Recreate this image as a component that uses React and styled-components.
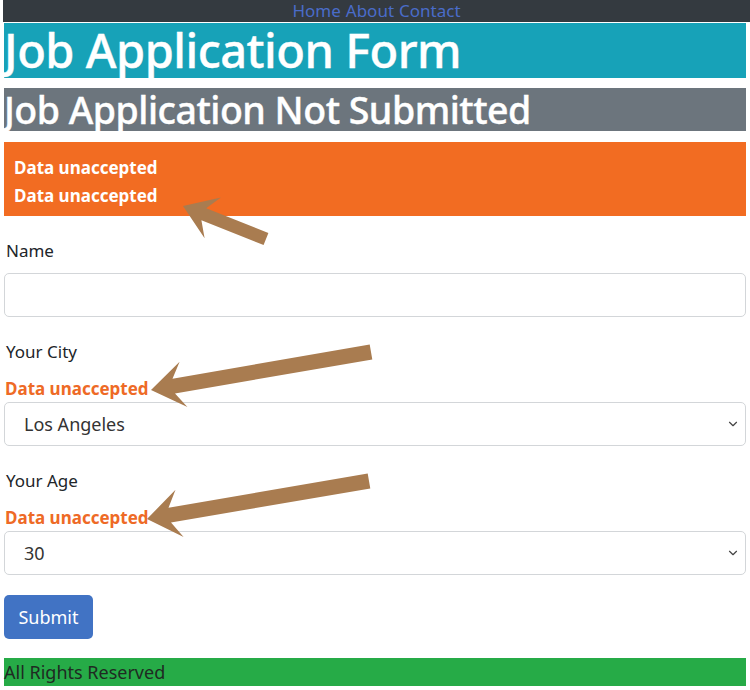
import React from "react"
import styled, { createGlobalStyle } from "styled-components"
import { ChevronDown } from "lucide-react"

const GlobalStyle = createGlobalStyle`
  body {
    margin: 0;
    background: #fff;
    font-family: "Noto Sans", "Open Sans", sans-serif;
    color: #212529;
  }
`

const Page = styled.div`
  position: relative;
  width: 750px;
  min-height: 690px;
  overflow: hidden;
`

const Nav = styled.nav`
  height: 22px;
  margin-left: 3px;
  background: #343a40;
  display: flex;
  justify-content: center;
  align-items: center;
  gap: 5px;
  font-size: 17px;
  line-height: 22px;

  a {
    color: #4a6cc9;
    text-decoration: none;
  }
`

const Container = styled.div`
  margin: 0 4px;
`

const Banner = styled.h1`
  margin: ${(p) => p.$mt}px 0 0;
  height: ${(p) => p.$h}px;
  line-height: ${(p) => p.$h}px;
  font-size: ${(p) => p.$size}px;
  font-weight: 500;
  color: #fff;
  background: ${(p) => p.$bg};
  white-space: nowrap;
  letter-spacing: -0.5px;
  -webkit-text-stroke: 0.4px #fff;
`

const Alert = styled.div`
  margin-top: 11px;
  padding: 12px 10px 6px;
  background: #f26c22;
  color: #fff;
  font-weight: 700;
  font-size: 17px;

  p {
    margin: 0;
    line-height: 28px;
  }
`

const Form = styled.form`
  padding-top: 23px;
`

const Group = styled.div`
  margin-bottom: ${(p) => p.$mb}px;
`

const Label = styled.label`
  display: block;
  padding-left: 2px;
  margin-bottom: ${(p) => p.$mb}px;
  font-size: 17px;
  line-height: 24px;
`

const Error = styled.div`
  margin: 0 0 1px 1px;
  font-size: 17px;
  line-height: 24px;
  font-weight: 700;
  color: #ee6a26;
`

const Input = styled.input`
  display: block;
  box-sizing: border-box;
  width: 100%;
  height: 44px;
  border: 1px solid #d3d6d9;
  border-radius: 5px;
  font: inherit;
  outline: none;
`

const SelectWrap = styled.div`
  position: relative;

  svg {
    position: absolute;
    right: 6px;
    top: 50%;
    transform: translateY(-50%);
    color: #444;
    pointer-events: none;
  }
`

const Select = styled.select`
  display: block;
  box-sizing: border-box;
  width: 100%;
  height: 44px;
  padding: 0 19px;
  appearance: none;
  background: #fff;
  border: 1px solid #d3d6d9;
  border-radius: 5px;
  font-family: inherit;
  font-size: 18px;
  color: #333;
  outline: none;
`

const Button = styled.button`
  display: block;
  width: 89px;
  height: 44px;
  border: none;
  border-radius: 5px;
  background: #4173c4;
  color: #fff;
  font-family: inherit;
  font-size: 18px;
`

const Footer = styled.footer`
  margin-top: 19px;
  height: 28px;
  line-height: 28px;
  background: #26ab47;
  color: #1f2a22;
  font-size: 18px;
`

const Overlay = styled.svg`
  position: absolute;
  top: 0;
  left: 0;
  pointer-events: none;
`

// tip, tail, shaft half width, head length, head half width
function arrowPoints([tx, ty], [ex, ey], w, L, H) {
  const dx = ex - tx
  const dy = ey - ty
  const len = Math.hypot(dx, dy)
  const ux = dx / len
  const uy = dy / len
  const nx = -uy
  const ny = ux
  const at = (d, o) => `${(tx + ux * d + nx * o).toFixed(1)},${(ty + uy * d + ny * o).toFixed(1)}`
  return [
    at(0, 0),
    at(L, H),
    at(L * 0.7, w),
    at(len, w),
    at(len, -w),
    at(L * 0.7, -w),
    at(L, -H),
  ].join(" ")
}

const arrows = [
  { tip: [183, 206], tail: [266, 239], w: 6.5, L: 32, H: 22 },
  { tip: [151, 390], tail: [371, 352], w: 7.5, L: 33, H: 23 },
  { tip: [147, 519], tail: [369, 481], w: 7.5, L: 33, H: 24 },
]

export default function App() {
  return (
    <Page>
      <GlobalStyle />
      <Nav>
        <a href="#">Home</a>
        <a href="#">About</a>
        <a href="#">Contact</a>
      </Nav>
      <Container>
        <Banner $mt={1} $h={55} $size={47} $bg="#17a2b8">Job Application Form</Banner>
        <Banner $mt={10} $h={43} $size={37.5} $bg="#6c757d">Job Application Not Submitted</Banner>
        <Alert>
          <p>Data unaccepted</p>
          <p>Data unaccepted</p>
        </Alert>
        <Form onSubmit={(e) => e.preventDefault()}>
          <Group $mb={23}>
            <Label $mb={10}>Name</Label>
            <Input type="text" />
          </Group>
          <Group $mb={23}>
            <Label $mb={13}>Your City</Label>
            <Error>Data unaccepted</Error>
            <SelectWrap>
              <Select defaultValue="Los Angeles">
                <option>Los Angeles</option>
                <option>New York</option>
                <option>Chicago</option>
              </Select>
              <ChevronDown size={14} strokeWidth={2} />
            </SelectWrap>
          </Group>
          <Group $mb={20}>
            <Label $mb={13}>Your Age</Label>
            <Error>Data unaccepted</Error>
            <SelectWrap>
              <Select defaultValue="30">
                <option>20</option>
                <option>30</option>
                <option>40</option>
              </Select>
              <ChevronDown size={14} strokeWidth={2} />
            </SelectWrap>
          </Group>
          <Button type="submit">Submit</Button>
        </Form>
        <Footer>All Rights Reserved</Footer>
      </Container>
      <Overlay width="750" height="690" viewBox="0 0 750 690">
        {arrows.map((a, i) => (
          <polygon key={i} points={arrowPoints(a.tip, a.tail, a.w, a.L, a.H)} fill="#a97c50" />
        ))}
      </Overlay>
    </Page>
  )
}
